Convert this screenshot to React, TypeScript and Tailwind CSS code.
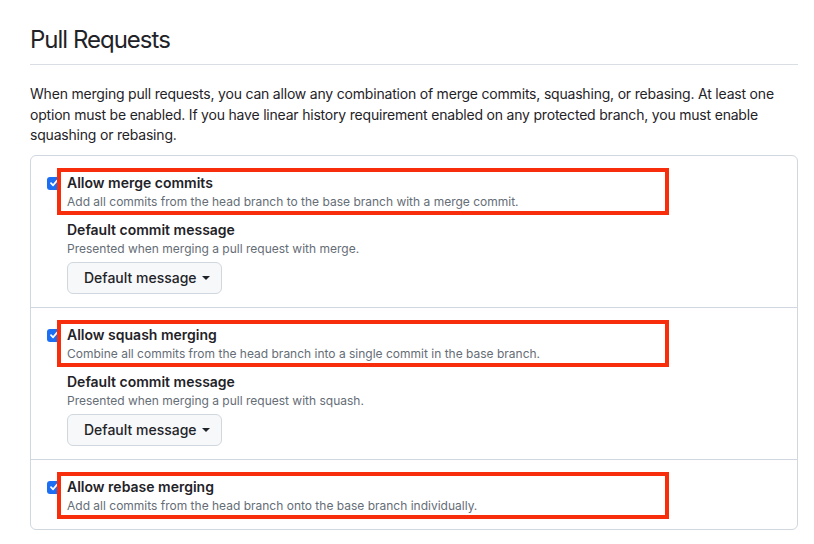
import { ReactNode } from "react";

function CheckBox() {
  return (
    <span className="absolute left-0 top-[5px] flex h-[13px] w-[13px] items-center justify-center rounded-[3px] bg-[#1c6ef2]">
      <svg width="10" height="10" viewBox="0 0 10 10" fill="none">
        <path d="M2 5.2 L4.1 7.3 L8 2.6" stroke="white" strokeWidth="1.8" strokeLinecap="round" strokeLinejoin="round" />
      </svg>
    </span>
  );
}

function DefaultMessageButton() {
  return (
    <button className="mt-1 flex h-8 w-[155px] items-center rounded-md border border-[#d0d7de] bg-[#f6f8fa] pl-[16px] text-sm font-medium text-[#1f2328]">
      Default message
      <span className="ml-[5px] mt-[1px] h-0 w-0 border-x-[4px] border-t-[4px] border-x-transparent border-t-[#1f2328]" />
    </button>
  );
}

function Option({
  title,
  description,
  children,
  last,
}: {
  title: string;
  description: string;
  children?: ReactNode;
  last?: boolean;
}) {
  return (
    <div className={`px-4 pt-4 ${last ? "pb-[14px]" : "pb-[13px] border-b border-[#d0d7de]"}`}>
      <div className="relative pl-5">
        <CheckBox />
        <div className="relative">
          <div className="text-sm font-semibold leading-[21px] text-[#1f2328]">{title}</div>
          <div className="text-xs leading-[18px] text-[#656d76]">{description}</div>
          <div className="pointer-events-none absolute -bottom-[4px] -left-[10px] -top-[4px] w-[612px] border-4 border-[#f82d0c]" />
        </div>
        {children}
      </div>
    </div>
  );
}

function CommitMessage({ kind }: { kind: string }) {
  return (
    <div className="mt-2">
      <div className="text-sm font-semibold leading-[21px] text-[#1f2328]">Default commit message</div>
      <div className="text-xs leading-[18px] text-[#656d76]">Presented when merging a pull request with {kind}.</div>
      <DefaultMessageButton />
    </div>
  );
}

export default function App() {
  return (
    <div className="min-h-[544px] bg-white font-['Inter','Noto_Sans',sans-serif] text-[#1f2328]">
      <div className="ml-[30px] w-[768px] pt-[22px]">
        <h2 className="border-b border-[#d8dee4] pb-[6px] text-2xl font-normal leading-9 tracking-[-1px]">Pull Requests</h2>
        <p className="mt-[19px] text-sm leading-[20.5px] tracking-[-0.2px]">
          When merging pull requests, you can allow any combination of merge commits, squashing, or rebasing. At least one
          <br />
          option must be enabled. If you have linear history requirement enabled on any protected branch, you must enable
          <br />
          squashing or rebasing.
        </p>
        <div className="mt-[9px] rounded-md border border-[#d0d7de]">
          <Option title="Allow merge commits" description="Add all commits from the head branch to the base branch with a merge commit.">
            <CommitMessage kind="merge" />
          </Option>
          <Option title="Allow squash merging" description="Combine all commits from the head branch into a single commit in the base branch.">
            <CommitMessage kind="squash" />
          </Option>
          <Option title="Allow rebase merging" description="Add all commits from the head branch onto the base branch individually." last />
        </div>
      </div>
    </div>
  );
}
